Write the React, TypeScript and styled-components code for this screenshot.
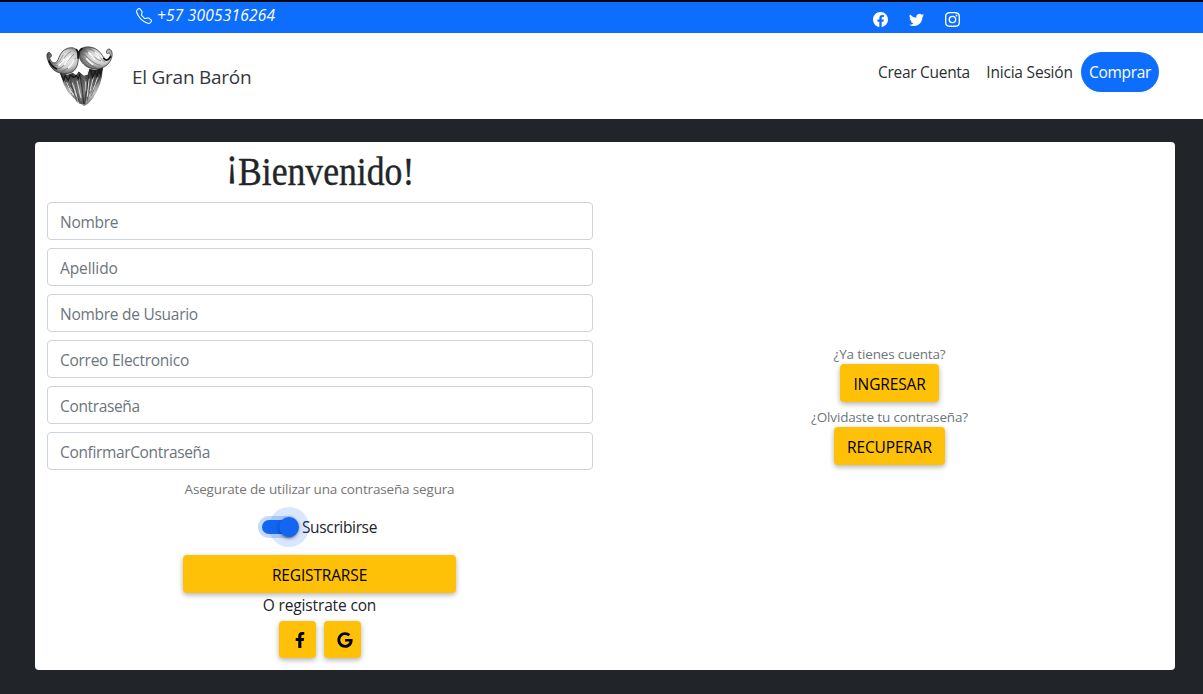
import React from "react";
import styled, { createGlobalStyle } from "styled-components";
import { BsFacebook, BsInstagram, BsTelephone, BsTwitter } from "react-icons/bs";
import { FaFacebookF, FaGoogle } from "react-icons/fa";

const GlobalStyle = createGlobalStyle`
  *, *::before, *::after { box-sizing: border-box; }
  body {
    margin: 0;
    background: #212529;
    color: #212529;
    font-family: "Open Sans", "Noto Sans", sans-serif;
    font-size: 15.5px;
    line-height: 24px;
  }
`;

const Page = styled.div`
  height: 694px;
  display: flex;
  flex-direction: column;
  overflow: hidden;
`;

const TopBar = styled.header`
  height: 33px;
  border-top: 2px solid #000510;
  background: #0d6efd;
  color: #fff;
  display: flex;
  justify-content: space-between;
  padding: 0 243px 0 136px;
`;

const Phone = styled.a`
  display: flex;
  align-items: center;
  gap: 5px;
  height: 25px;
  font-size: 15.5px;
  font-style: italic;
  letter-spacing: 0.2px;
  white-space: nowrap;
  svg { margin-top: 3px; }
`;

const Socials = styled.div`
  display: flex;
  gap: 21px;
  padding-top: 10px;
  svg { display: block; }
`;

const NavBar = styled.nav`
  height: 86px;
  flex: none;
  background: #fff;
  display: flex;
  justify-content: space-between;
  align-items: flex-start;
  padding: 12px 44px 0 46px;
`;

const Brand = styled.a`
  display: flex;
  align-items: flex-start;
  gap: 18px;
`;

const BrandName = styled.span`
  padding-top: 17px;
  color: #33373b;
  font-size: 19px;
  line-height: 30px;
  letter-spacing: -0.25px;
  white-space: nowrap;
`;

const NavLinks = styled.div`
  display: flex;
  padding-top: 7px;
`;

const NavLink = styled.a<{ $width: number; $pill?: boolean; $spacing?: number }>`
  width: ${(p) => p.$width}px;
  height: 40px;
  line-height: 41px;
  text-align: center;
  white-space: nowrap;
  letter-spacing: ${(p) => p.$spacing ?? -0.3}px;
  border-radius: 20px;
  background: ${(p) => (p.$pill ? "#0d6efd" : "transparent")};
  color: ${(p) => (p.$pill ? "#fff" : "#2b2f33")};
  font-weight: ${(p) => (p.$pill ? 500 : 400)};
`;

const Card = styled.main`
  margin: 23px 28px 0 35px;
  height: 528px;
  border-radius: 4px;
  background: #fff;
  display: grid;
  grid-template-columns: 1fr 1fr;
`;

const SignUp = styled.form`
  display: flex;
  flex-direction: column;
  align-items: center;
  padding: 5px 12px 0;
`;

const Title = styled.h1`
  margin: 0 0 7px;
  height: 48px;
  font: 400 41px/48px "Liberation Serif", serif;
  white-space: nowrap;
  transform: scaleX(0.87);
  -webkit-text-stroke: 0.4px #212529;
`;

const RaisedMark = styled.span`
  display: inline-block;
  transform: translateY(-9px);
`;

const Field = styled.input<{ $spacing?: number }>`
  width: 100%;
  height: 38px;
  margin-bottom: 8px;
  padding: 7px 12px 6px;
  border: 1px solid #ced4da;
  border-radius: 4px;
  background: #fff;
  font: inherit;
  letter-spacing: ${(p) => p.$spacing ?? -0.27}px;
  &::placeholder { color: #6c757d; opacity: 1; }
`;

const Hint = styled.small<{ $spacing?: number }>`
  color: #757575;
  font-size: 13.5px;
  line-height: 21px;
  letter-spacing: ${(p) => p.$spacing ?? -0.16}px;
  white-space: nowrap;
`;

const SwitchRow = styled.label`
  display: flex;
  align-items: center;
  gap: 7px;
  height: 24px;
  margin: 15px 0 16px;
  letter-spacing: -0.35px;
`;

const Track = styled.span`
  position: relative;
  width: 33px;
  height: 14px;
  border-radius: 7px;
  background: #1266f1;
  box-shadow: 0 0 0 4px rgba(13, 110, 253, 0.25);
`;

const Thumb = styled.span`
  position: absolute;
  top: -3px;
  left: 17px;
  width: 20px;
  height: 20px;
  border-radius: 50%;
  background: #1266f1;
  box-shadow: 0 3px 3px -2px rgba(0, 0, 0, 0.4), 0 1px 4px rgba(0, 0, 0, 0.3),
    0 0 0 10px rgba(18, 102, 241, 0.16);
`;

const Button = styled.button<{ $width: number; $spacing?: number }>`
  display: flex;
  align-items: center;
  justify-content: center;
  flex: none;
  width: ${(p) => p.$width}px;
  height: 38px;
  padding: 1px 0 0;
  border: 0;
  border-radius: 4px;
  background: #ffc107;
  color: #000;
  font: inherit;
  letter-spacing: ${(p) => p.$spacing ?? -0.15}px;
  box-shadow: 0 2px 5px rgba(0, 0, 0, 0.2), 0 2px 6px rgba(0, 0, 0, 0.12);
`;

const IconButton = styled(Button)`
  height: 37px;
  padding: 0 0 0 4px;
`;

const Alternative = styled.span`
  line-height: 24px;
  letter-spacing: -0.15px;
`;

const Actions = styled.div`
  display: flex;
  flex-direction: column;
  align-items: center;
  padding: 1px 1px 0 0;
`;

const Providers = styled.div`
  display: flex;
  gap: 8px;
  margin: 4px 0 0 1px;
`;

const Aside = styled.section`
  display: flex;
  flex-direction: column;
  align-items: center;
  padding: 202px 1px 0 0;
  ${Hint} { color: #6c757d; line-height: 20px; }
  ${Button} + ${Hint} { margin-top: 5px; }
`;

const beardHairs = Array.from({ length: 34 }, (_, i) => {
  const t = i / 33;
  const x = 64 + t * 122;
  const top = t < 0.35 ? 108 + (i % 3) * 3 : t < 0.62 ? 116 + (i % 4) * 5 : 98 + (i % 3) * 4;
  const depth = 26 + Math.sin(Math.PI * t) * 48 + (i % 5) * 6;
  const endX = x + (131 - x) * 0.45;
  return `M${x} ${top}Q${x + (131 - x) * 0.08} ${top + depth * 0.6} ${endX} ${Math.min(top + depth, 198)}`;
}).join("");

const BeardLogo = () => (
  <svg width="68" height="61" viewBox="18 21 204 183" fill="none" aria-hidden="true">
    <defs>
      <linearGradient id="beard" x1="0" y1="95" x2="0" y2="204" gradientUnits="userSpaceOnUse">
        <stop offset="0" stopColor="#222" />
        <stop offset=".3" stopColor="#777" />
        <stop offset=".65" stopColor="#c4c4c4" />
        <stop offset="1" stopColor="#777" />
      </linearGradient>
      <radialGradient id="curl" cx=".62" cy=".45" r=".6">
        <stop offset="0" stopColor="#f4f4f4" />
        <stop offset=".55" stopColor="#ccc" />
        <stop offset="1" stopColor="#555" />
      </radialGradient>
    </defs>
    <path
      d="M60 104L84 110L98 104L109 112L116 100L130 112L143 110L148 92L165 96L188 88L186 116L180 138L171 160L158 182L144 197L133 204L122 197L101 181L84 163L71 139Z"
      fill="url(#beard)"
    />
    <path d={beardHairs} stroke="#222" strokeWidth="1.3" />
    <path
      d="M80 132L93 164M97 134L110 176M111 128L123 180M147 122L142 176M160 118L150 160M173 118L160 155M88 150L101 172M137 130L138 160"
      stroke="#eee"
      strokeWidth="2.6"
    />
    <path
      d="M62 106L71 127L75 113L85 126L91 111L100 118L109 112L115 122L120 108M152 96L158 118L165 100L171 114L176 97L181 108L187 91"
      stroke="#1a1a1a"
      strokeWidth="4"
    />
    <path d="M120 112Q128 150 131 198M146 112Q140 160 134 198" stroke="#222" strokeWidth="2.4" />
    <path d="M117 60L127 72L145 88L143 109L132 113L120 102L108 98L98 104L111 82Z" fill="#fff" />
    <path
      d="M28 43C19 43 19 57 25 70C32 93 48 104 67 106C88 109 102 103 110 86C118 67 116 43 108 34C99 26 80 28 68 40C57 51 57 65 49 73C40 79 29 69 29 57C35 60 37 48 28 43Z"
      fill="url(#curl)"
      stroke="#333"
      strokeWidth="2.4"
    />
    <path
      d="M116 41C122 29 138 24 154 28C173 32 182 44 190 57C198 70 208 66 211 54C212 43 204 42 203 48C195 43 202 30 210 34C222 42 216 67 203 79C188 94 165 97 148 89C130 83 120 67 116 52Z"
      fill="url(#curl)"
      stroke="#333"
      strokeWidth="2.4"
    />
    <path
      d="M42 83C64 89 72 48 94 40M50 93C72 92 82 67 102 48M65 99C86 95 94 79 106 61M34 75C50 88 63 63 70 50M127 37C148 39 162 62 183 69M125 47C143 53 154 77 182 82M126 60C138 67 147 82 169 90M147 32C168 38 177 61 195 72"
      stroke="#555"
      strokeWidth="1.8"
    />
    <path
      d="M73 81Q84 65 92 52M84 91Q98 78 103 64M55 83Q68 75 72 62M145 43Q159 53 165 65M139 61Q151 76 160 80M165 42Q174 49 179 62"
      stroke="#fff"
      strokeWidth="4"
    />
    <path d="M26 67Q35 87 51 93M190 60Q201 75 213 54M108 34Q116 38 114 62M116 54Q115 37 128 31" stroke="#151515" strokeWidth="5" />
  </svg>
);

const fields = [
  { label: "Nombre" },
  { label: "Apellido", spacing: -0.1 },
  { label: "Nombre de Usuario" },
  { label: "Correo Electronico" },
  { label: "Contraseña", spacing: -0.35 },
  { label: "ConfirmarContraseña", spacing: -0.35 },
];

export default function App() {
  return (
    <Page>
      <GlobalStyle />
      <TopBar>
        <Phone>
          <BsTelephone size={16} />
          +57 3005316264
        </Phone>
        <Socials>
          <BsFacebook size={15} />
          <BsTwitter size={15} />
          <BsInstagram size={15} />
        </Socials>
      </TopBar>
      <NavBar>
        <Brand>
          <BeardLogo />
          <BrandName>El Gran Barón</BrandName>
        </Brand>
        <NavLinks>
          <NavLink $width={108}>Crear Cuenta</NavLink>
          <NavLink $width={103} $spacing={-0.2}>Inicia Sesión</NavLink>
          <NavLink $width={78} $pill>Comprar</NavLink>
        </NavLinks>
      </NavBar>
      <Card>
        <SignUp>
          <Title><RaisedMark>¡</RaisedMark>Bienvenido!</Title>
          {fields.map((f) => (
            <Field key={f.label} placeholder={f.label} aria-label={f.label} $spacing={f.spacing} />
          ))}
          <Actions>
            <Hint>Asegurate de utilizar una contraseña segura</Hint>
            <SwitchRow>
              <Track><Thumb /></Track>
              Suscribirse
            </SwitchRow>
            <Button type="button" $width={273}>REGISTRARSE</Button>
            <Alternative>O registrate con</Alternative>
            <Providers>
              <IconButton type="button" $width={37} aria-label="Facebook"><FaFacebookF size={16} /></IconButton>
              <IconButton type="button" $width={37} aria-label="Google"><FaGoogle size={16} /></IconButton>
            </Providers>
          </Actions>
        </SignUp>
        <Aside>
          <Hint>¿Ya tienes cuenta?</Hint>
          <Button type="button" $width={99}>INGRESAR</Button>
          <Hint>¿Olvidaste tu contraseña?</Hint>
          <Button type="button" $width={111}>RECUPERAR</Button>
        </Aside>
      </Card>
    </Page>
  );
}
